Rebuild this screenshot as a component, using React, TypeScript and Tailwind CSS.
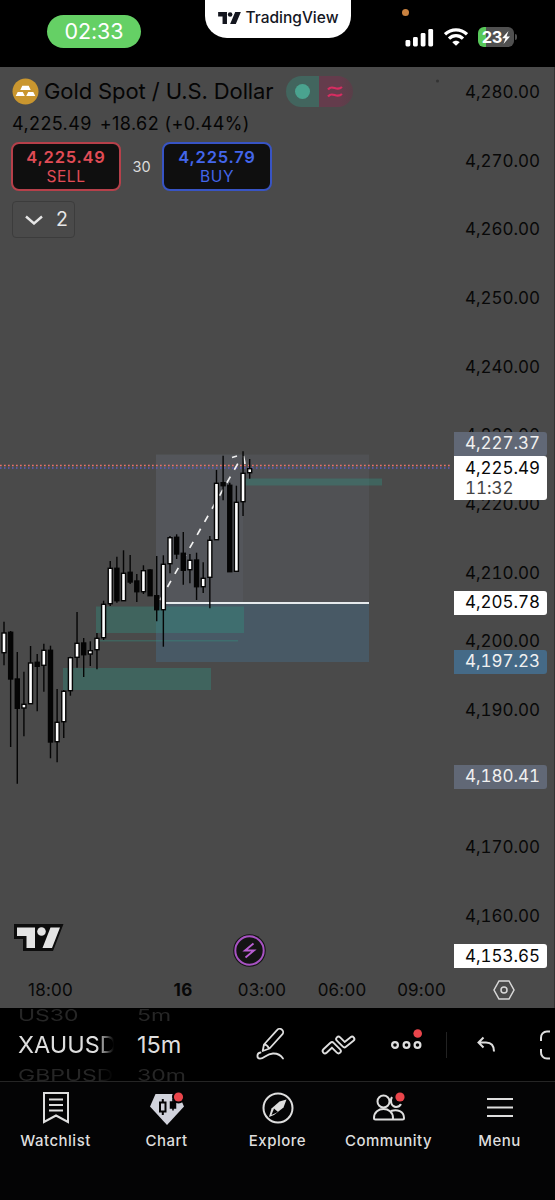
import React from "react";

type Candle = [number, number, number, number, boolean];

// high, body top, body bottom, low (chart pixels, page origin), rising
const candles: Candle[] = [
  [621.7, 633, 652.7, 665.3, true],
  [631, 632.3, 679, 747, false],
  [652, 679, 708.3, 783.7, false],
  [671.7, 704.3, 708, 736.3, true],
  [646, 663, 703.7, 703.7, true],
  [654, 662.3, 666.3, 711.3, false],
  [643.7, 650.3, 665.3, 691.7, true],
  [645.7, 650.3, 742, 758.3, false],
  [689, 722.3, 741.7, 762.3, true],
  [690, 691.3, 721.7, 738, true],
  [656.7, 657.7, 690.7, 695.7, true],
  [612, 643.3, 657.3, 667.7, true],
  [638, 643, 654.7, 677, false],
  [641.3, 650.7, 654, 666, true],
  [633, 638.3, 649.7, 669.3, true],
  [600.7, 604.3, 637.7, 640, true],
  [561, 568.3, 603.7, 606, true],
  [556.7, 568.3, 600.7, 602.7, false],
  [550.3, 573.3, 600.7, 600.7, true],
  [555, 572.3, 582, 584, false],
  [574, 581, 591.7, 602, false],
  [565.3, 570.7, 591.7, 594, true],
  [569.3, 570, 595.7, 596, false],
  [556, 595.7, 609.7, 621.3, false],
  [555.3, 564.3, 609.7, 646.7, true],
  [536, 537.7, 563.7, 573.3, true],
  [534.3, 537.3, 554, 559, false],
  [532, 553.3, 570.3, 584.7, false],
  [554, 560.3, 569.7, 583.3, true],
  [552.7, 560, 586.7, 600, false],
  [562.3, 578.3, 586.7, 593, true],
  [536, 540.3, 577.3, 608.3, true],
  [470, 483.3, 539.7, 539.7, true],
  [455.7, 482.7, 485.7, 500.3, false],
  [482.7, 485.3, 571.7, 571.7, false],
  [485.7, 502.3, 571.3, 571.3, true],
  [451.3, 473.3, 501.7, 516, true],
  [459, 468.7, 472.7, 478.7, true],
];

// the empty slot is the one fully covered by a price badge
const prices = [
  "4,280.00", "4,270.00", "4,260.00", "4,250.00", "4,240.00", "4,230.00", "4,220.00",
  "4,210.00", "4,200.00", "4,190.00", "", "4,170.00", "4,160.00",
];

function StatusBar() {
  return (
    <header className="flex h-[67px] shrink-0 items-start bg-black">
      <div className="mt-[15px] ml-[47px] flex h-[33px] w-[94px] items-center justify-center rounded-full bg-[#65d065] text-[21.500px] tracking-[-0.1px] text-white">
        02:33
      </div>
      <div className="ml-[64px] flex h-[38px] w-[146px] items-center justify-center gap-[5px] rounded-b-[22px] bg-white pb-[3px] text-[#14161f]">
        <svg width="23" height="12" viewBox="0 0 36 19" fill="currentColor">
          <path d="M0 0h14v19H7V7H0zM27 0h9l-8 19h-9z" />
          <circle cx="19" cy="4" r="3.6" />
        </svg>
        <span className="text-[15.500px] font-medium">TradingView</span>
      </div>
      <div className="relative ml-[54px] flex items-center pt-[27px]">
        <span className="absolute top-[9px] -left-[3px] size-[7px] rounded-full bg-[#c98240]" />
        <svg width="29" height="19" viewBox="0 0 29 19" fill="#fff">
          <rect x="0.500" y="12" width="4.800" height="6.500" rx="1.400" />
          <rect x="8" y="9" width="4.800" height="9.500" rx="1.400" />
          <rect x="15.700" y="5" width="4.800" height="13.500" rx="1.400" />
          <rect x="23.300" y="1" width="4.800" height="17.500" rx="1.400" />
        </svg>
        <svg className="ml-[10px]" width="24" height="18" viewBox="0 0 24 18" fill="none" stroke="#fff" strokeWidth="3.200">
          <path d="M1 6.300C7.300.3 16.700.3 23 6.300" />
          <path d="M5 10.700c4-4 10-4 14 0" />
          <path d="M8.300 14.200 12 17.800l3.700-3.600c-2-2-5.400-2-7.400 0z" fill="#fff" stroke="none" />
        </svg>
        <div className="ml-[10px] flex h-[20px] w-[36px] items-center justify-center rounded-[6px] bg-[linear-gradient(90deg,#58c85a_23%,#505050_23%)] text-[16.500px] font-bold text-white">
          <span className="tracking-[-0.3px]">23</span>
          <svg width="8" height="13" viewBox="0 0 8 13" fill="#fff"><path d="M6.500 0 0 7.300h3.500L1.500 13 8 5.500H4.500z" /></svg>
        </div>
        <span className="ml-[1px] h-[6px] w-[2px] rounded-r bg-[#505050]" />
      </div>
    </header>
  );
}

function QuoteButton({ price, side, tone }: { price: string; side: string; tone: string }) {
  return (
    <button className={`flex h-[49px] w-[110px] flex-col items-center justify-center rounded-[8px] border-2 bg-[#0f0f0f] ${tone}`}>
      <span className="text-[16.500px] leading-[20px] font-semibold tracking-[0.8px]">{price}</span>
      <span className="text-[15.500px] leading-[20px] tracking-[0.6px]">{side}</span>
    </button>
  );
}

function Legend() {
  return (
    <div className="relative flex flex-col items-start pt-[9px] pl-[12px] text-[#050505]">
      <div className="flex h-[31px] items-center">
        <svg width="27" height="27" viewBox="0 0 27 27">
          <circle cx="13.500" cy="13.500" r="13" fill="#c9962f" />
          <g fill="#fff">
            <path d="M10.300 7.800h6.400l2 4.200H8.300zM5.700 14h5.100l2 4H3.700zM16.200 14h5.100l2 4h-9.100z" />
          </g>
        </svg>
        <h1 className="ml-[5px] w-[229px] text-[22px] leading-[29px] tracking-[-0.1px] whitespace-nowrap">Gold Spot / U.S. Dollar</h1>
        <div className="ml-[13px] flex h-[31px] w-[67px] overflow-hidden rounded-full">
          <span className="flex w-[33px] items-center justify-center bg-[#42655e]"><i className="size-[15px] rounded-full bg-[#4aa38f]" /></span>
          <span className="flex w-[34px] items-center justify-center bg-[linear-gradient(90deg,#643c4c_60%,#583f48)] pr-[2px]">
            <svg width="16" height="14" viewBox="0 0 16 14" fill="none" stroke="#d62d61" strokeWidth="2.200"><path d="M1 4.500c5-6 8 3 14-2.500M1 11.500c5-6 8 3 14-2.500" /></svg>
          </span>
        </div>
      </div>
      <p className="mt-[4px] flex h-[24px] items-center gap-[8px] pt-px text-[18px] tracking-[0.4px]">
        <span>4,225.49</span><span>+18.62 (+0.44%)</span>
      </p>
      <div className="mt-[7px] -ml-px flex items-center">
        <QuoteButton price="4,225.49" side="SELL" tone="border-[#b6404a] text-[#e14c56]" />
        <span className="w-[41px] text-center text-[14.500px] leading-[19px] text-[#dcdcdc]">30</span>
        <QuoteButton price="4,225.79" side="BUY" tone="border-[#3854c4] text-[#4366ea]" />
      </div>
      <button className="mt-[10px] flex h-[37px] w-[63px] items-center rounded-[4px] border border-[#3c3c3c] pl-[12px] text-[19.500px] text-[#e6e6e6]">
        <svg width="18" height="10" viewBox="0 0 18 10" fill="none" stroke="currentColor" strokeWidth="2.400"><path d="m1 1.500 8 7 8-7" /></svg>
        <span className="ml-[13px]">2</span>
      </button>
    </div>
  );
}

function Plot() {
  return (
    <svg className="absolute inset-0" width="454" height="905" viewBox="0 67 454 905">
      <rect x="156" y="454.500" width="213" height="148.500" fill="#68707f" fillOpacity=".2" />
      <rect x="156" y="454.500" width="87" height="148.500" fill="#68707f" fillOpacity=".18" />
      <rect x="156" y="603" width="213" height="59" fill="#4682ad" fillOpacity=".28" />
      <g fill="#2f9481" fillOpacity=".36">
        <rect x="96" y="606.500" width="148" height="26.500" />
        <rect x="97" y="640" width="141" height="1.500" />
        <rect x="63" y="668" width="148" height="22" />
        <rect x="243" y="478.500" width="139" height="7" />
      </g>
      <path d="M163 603h206" stroke="#e6eaec" strokeWidth="2" />
      <path d="M0 465.500h451" stroke="#ec736a" strokeWidth="1.700" strokeDasharray="1.700 2.300" />
      <path d="M0 468h451" stroke="#5b5fc0" strokeWidth="1.500" strokeDasharray="1.500 2.500" />
      <path d="M160 600 241 458" stroke="#f2f2f2" strokeWidth="1.700" strokeDasharray="7 8" />
      <path d="m232 457.500 5-1.500M243.500 456l1.500 8" stroke="#eee" strokeWidth="1.700" />
      {candles.map(([high, top, bottom, low, rising], i) => {
        const x = 4 + i * 6.64;
        return (
          <g key={i} stroke="#050505" strokeWidth="1.400">
            <path d={`M${x} ${high}V${low}`} />
            <rect x={x - 2} y={top} width="4" height={bottom - top} fill={rising ? "#fff" : "#050505"} />
          </g>
        );
      })}
      <circle cx="437.500" cy="81" r="1.500" fill="#333" />
      <g transform="translate(14 924)">
        <path d="M0 0h49.500L39 27H9V15H0z" fill="#0d0d0d" />
        <path d="M3 3.500h18V24h-8.500V12H3zM36.500 3.500h9.500L38 24h-9.500z" fill="#e4e4e4" />
        <circle cx="27.500" cy="7.500" r="4.300" fill="#e4e4e4" />
      </g>
      <circle cx="249.500" cy="950.500" r="16.300" fill="#141414" />
      <circle cx="249.500" cy="950.500" r="14.200" fill="none" stroke="#a753c2" strokeWidth="2" />
      <path d="m253.500 943.500-8.500 7h9l-8.500 7" fill="none" stroke="#b95fd2" strokeWidth="1.900" />
    </svg>
  );
}

function PriceAxis() {
  const badge = "absolute left-0 flex w-[93px] rounded-r-[3px] pl-[11px]";
  return (
    <aside className="relative w-[100px] shrink-0 text-[17px] tracking-[-0.050px] tabular-nums text-[#080808]">
      <ul className="-mt-[8.500px]">
        {prices.map((p, i) => (
          <li key={i} className="flex h-[68.670px] items-center pl-[11px]">{p}</li>
        ))}
      </ul>
      <div className={`${badge} top-[365px] h-[24px] items-center bg-[#616876] text-[#f0f0f0]`}>4,227.37</div>
      <div className={`${badge} top-[389px] h-[44px] flex-col bg-white pt-[2px] leading-[20px] text-[#080808]`}>
        <span>4,225.49</span><span className="text-[#444]">11:32</span>
      </div>
      <div className={`${badge} top-[524px] h-[24px] items-center bg-white`}>4,205.78</div>
      <div className={`${badge} top-[583px] h-[24px] items-center bg-[#456a87] text-[#f0f0f0]`}>4,197.23</div>
      <div className={`${badge} top-[698px] h-[24px] items-center bg-[#616876] text-[#f0f0f0]`}>4,180.41</div>
      <div className={`${badge} top-[877px] h-[24px] items-center bg-white pt-px`}>4,153.65</div>
    </aside>
  );
}

function TimeAxis() {
  return (
    <div className="flex h-[36px] shrink-0 items-center text-[17px] tracking-[0.2px] text-[#080808]">
      <span className="w-[101px] pt-[2px] text-center">18:00</span>
      <span className="w-[164px] pt-[2px] text-center font-bold">16</span>
      <span className="-ml-[43px] w-[80px] pt-[2px] text-center">03:00</span>
      <span className="w-[80px] pt-[2px] text-center">06:00</span>
      <span className="w-[79px] pt-[2px] text-center">09:00</span>
      <svg className="ml-[32px]" width="22" height="20" viewBox="0 0 22 20" fill="none" stroke="#d8d8d8" strokeWidth="1.500">
        <path d="M6 1h10l5 9-5 9H6l-5-9z" /><circle cx="11" cy="10" r="3" />
      </svg>
    </div>
  );
}

function Wheel({ items, className }: { items: string[]; className: string }) {
  return (
    <div className={`flex h-[73px] flex-col overflow-hidden whitespace-nowrap ${className}`}>
      <span className="h-[21px] origin-left scale-y-[.72] text-[23px] leading-[12px] text-[#262626]">{items[0]}</span>
      <span className="h-[34px] text-[23.500px] leading-[38px] text-[#dedede]">{items[1]}</span>
      <span className="h-[21px] origin-left scale-y-[.72] text-[23px] leading-[34px] text-[#262626]">{items[2]}</span>
    </div>
  );
}

function Toolbar() {
  return (
    <div className="flex h-[74px] shrink-0 items-center overflow-hidden border-b border-[#252525] bg-black">
      <Wheel items={["US30", "XAUUSD", "GBPUSD"]} className="ml-[18px] w-[96px] shrink-0 [mask-image:linear-gradient(90deg,#000_82%,transparent)]" />
      <Wheel items={["5m", "15m", "30m"]} className="ml-[23px] w-[60px] shrink-0" />
      <svg className="ml-[59px] shrink-0" width="30" height="34" viewBox="0 0 30 34" fill="none" stroke="#dedede" strokeWidth="1.800" strokeLinecap="round" strokeLinejoin="round">
        <path d="m8 16.500 13-14.300a3 3 0 0 1 5.500 4L13.500 20.500 6.700 23zM8.300 16.500c2 0 3.500 1.500 4.700 4" />
        <path d="M4.500 24.500C.5 25 .5 30.500 4 30.700c4.500 0 6-4.700 13-5.200 5-.2 8 2 10 5" />
      </svg>
      <svg className="ml-[35px] shrink-0" width="35" height="22" viewBox="0 0 35 22" fill="none" strokeLinejoin="round" strokeLinecap="round">
        <path d="m4 17 7-6.500 6.500 6.500M17.500 5l6 6 7.500-6" stroke="#dedede" strokeWidth="6.500" />
        <path d="m4 17 7-6.500 6.500 6.500M17.500 5l6 6 7.500-6" stroke="#000" strokeWidth="2.800" />
      </svg>
      <svg className="mb-[8px] ml-[34px] shrink-0" width="34" height="26" viewBox="0 0 34 26" fill="none" stroke="#dedede" strokeWidth="2.200">
        <circle cx="5" cy="17" r="2.900" /><circle cx="16.500" cy="17" r="2.900" /><circle cx="27.500" cy="17" r="2.900" />
        <circle cx="27.700" cy="5.500" r="4.300" fill="#ea454b" stroke="none" />
      </svg>
      <span className="ml-[22px] h-[26px] w-px shrink-0 bg-[#222]" />
      <svg className="ml-[29px] shrink-0" width="20" height="18" viewBox="0 0 20 18" fill="none" stroke="#dedede" strokeWidth="2">
        <path d="m7.500 1.500-5 5 5 5M2.500 6.500H10c5 0 8 3 8 9" />
      </svg>
      <svg className="ml-[43px] shrink-0" width="12" height="30" viewBox="0 0 12 30" fill="none" stroke="#dedede" strokeWidth="2">
        <path d="M11 1.500H8A6 6 0 0 0 2 8v3M2 19v3a6 6 0 0 0 6 6.500h3" />
      </svg>
    </div>
  );
}

function Tab({ label, children }: { label: string; children: React.ReactNode }) {
  return (
    <a className="flex w-[111px] shrink-0 flex-col items-center">
      <span className="flex h-[36px] items-center justify-center">{children}</span>
      <span className="mt-[4px] text-[15px] leading-[21px] font-medium tracking-[0.500px] text-[#dedede]">{label}</span>
    </a>
  );
}

function TabBar() {
  return (
    <nav className="flex flex-1 items-start bg-[#040405] pt-[8px]">
      <Tab label="Watchlist">
        <svg width="28" height="34" viewBox="0 0 28 34" fill="none" stroke="#dedede" strokeWidth="2">
          <path d="M2 2h24v29l-12-6.500L2 31zM7 8.500h14M7 14h14M7 19.500h14" />
        </svg>
      </Tab>
      <Tab label="Chart">
        <svg width="36" height="34" viewBox="0 0 36 34">
          <path d="M6.500 3h23L35 15.500 18 34 1 15.500z" fill="#d1d3dc" />
          <path d="M11 11.500h5.500v9H11zM13.800 8v3.500m0 9V24" fill="none" stroke="#040405" strokeWidth="2" />
          <path d="M21.500 11h5v6h-5zM24 8v11.500" fill="#040405" stroke="#040405" strokeWidth="1.500" />
          <circle cx="29.500" cy="6" r="6.500" fill="#040405" /><circle cx="29.500" cy="6" r="4.600" fill="#ea454b" />
        </svg>
      </Tab>
      <Tab label="Explore">
        <svg width="34" height="34" viewBox="0 0 34 34">
          <circle cx="17" cy="17" r="14.500" fill="none" stroke="#dedede" strokeWidth="2" />
          <path d="m25.500 8.500-3 8L13 24l-5 2 2.500-8.500 8-7z" fill="#dedede" />
          <path d="m13 17.500 4 3.500-6.500 3z" fill="#040405" />
        </svg>
      </Tab>
      <Tab label="Community">
        <svg width="34" height="34" viewBox="0 0 34 34" fill="none" stroke="#dedede" strokeWidth="2">
          <circle cx="11.500" cy="10.500" r="6" />
          <path d="M2 27c0-12 19-12 19 0 0 1-.5 1.500-1.500 1.500h-16C2.500 28.500 2 28 2 27zM19 20c6-2 13 0 13 7 0 1-.5 1.500-1.500 1.500H20M20 6c-2.500 4-.5 10 4 10 2.500 0 4-1 5-3" />
          <circle cx="28" cy="6" r="6.500" fill="#040405" stroke="none" /><circle cx="28" cy="6" r="4.600" fill="#ea454b" stroke="none" />
        </svg>
      </Tab>
      <Tab label="Menu">
        <svg width="28" height="34" viewBox="0 0 28 34" stroke="#dedede" strokeWidth="2"><path d="M1 8h26M1 16.500h26M1 25h26" /></svg>
      </Tab>
    </nav>
  );
}

export default function App() {
  return (
    <main className="flex h-[1200px] w-[555px] flex-col overflow-hidden bg-black font-['Inter',sans-serif]">
      <StatusBar />
      <section className="flex h-[941px] shrink-0 flex-col border-r border-[#333] bg-[#4a4a4a]">
        <div className="flex h-[905px] shrink-0">
          <div className="relative w-[454px] shrink-0"><Plot /><Legend /></div>
          <PriceAxis />
        </div>
        <TimeAxis />
      </section>
      <Toolbar />
      <TabBar />
    </main>
  );
}
